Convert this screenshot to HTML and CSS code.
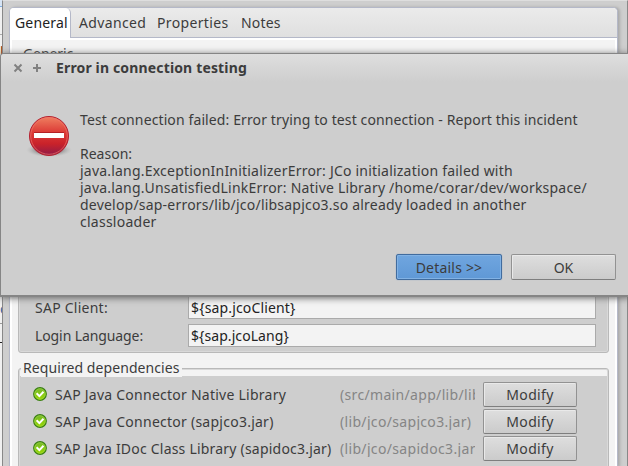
FILE: index.html
```html
<!DOCTYPE html>
<html lang="en">
<head>
<meta charset="utf-8">
<title>Error in connection testing</title>
<link rel="stylesheet" href="styles.css">
</head>
<body>
<svg width="0" height="0" class="defs">
  <defs>
    <linearGradient id="green" x1="0" y1="0" x2="0" y2="1"><stop offset="0" stop-color="#71b62c"/><stop offset="1" stop-color="#9bd900"/></linearGradient>
    <symbol id="check" viewBox="0 0 14 14">
      <circle cx="7" cy="7" r="6.3" fill="url(#green)" stroke="#397f12" stroke-width="1.2"/>
      <circle cx="7" cy="7" r="5.3" fill="none" stroke="#a4d94c" stroke-width=".6"/>
      <path d="M3.6 6.3L6.4 9.1L10.5 4.8" fill="none" stroke="#fff" stroke-width="2"/>
    </symbol>
  </defs>
</svg>
<div class="desktop">
  <div class="behind"><i class="b1"></i><i class="b2"></i><i class="b3">n</i><i class="b5">c</i><i class="b6"></i><i class="b7"></i></div>
  <main class="window">
    <section class="folder">
      <nav class="tabs">
        <span class="tab active"><span class="t-general">General</span></span>
        <span class="tab advanced"><span class="t-advanced">Advanced</span></span>
        <span class="tab properties"><span class="t-properties">Properties</span></span>
        <span class="tab notes"><span class="t-notes">Notes</span></span>
      </nav>
      <div class="page">
        <div class="generic-title">Generic</div>
        <div class="group connection">
          <div class="field"><label class="t-client">SAP Client:</label><div class="input"><span class="t-vclient">${sap.jcoClient}</span></div></div>
          <div class="field"><label class="t-lang">Login Language:</label><div class="input"><span class="t-vlang">${sap.jcoLang}</span></div></div>
        </div>
        <div class="group deps">
          <h2><span class="t-deps">Required dependencies</span></h2>
          <div class="dep-list">
            <div class="dep"><svg class="ok" width="14" height="14"><use href="#check"/></svg><span class="name"><span class="t-d1">SAP Java Connector Native Library</span></span><span class="path"><span class="t-p1">(src/main/app/lib/lib</span></span><span class="button"><span class="t-mod">Modify</span></span></div>
            <div class="dep"><svg class="ok" width="14" height="14"><use href="#check"/></svg><span class="name"><span class="t-d2">SAP Java Connector (sapjco3.jar)</span></span><span class="path"><span class="t-p2">(lib/jco/sapjco3.jar)</span></span><span class="button"><span class="t-mod">Modify</span></span></div>
            <div class="dep"><svg class="ok" width="14" height="14"><use href="#check"/></svg><span class="name"><span class="t-d3">SAP Java IDoc Class Library (sapidoc3.jar)</span></span><span class="path"><span class="t-p3">(lib/jco/sapidoc3.jar</span></span><span class="button"><span class="t-mod">Modify</span></span></div>
          </div>
        </div>
      </div>
    </section>
  </main>
  <section class="dialog">
    <header>
      <svg width="32" height="12" viewBox="0 0 32 12" fill="none" stroke="#818181" stroke-width="2"><path d="M1.5 2.5L8.5 9.5M8.5 2.5L1.5 9.5M20 6H28M24 2V10"/></svg>
      <h1><span class="t-title">Error in connection testing</span></h1>
    </header>
    <div class="body">
      <svg class="error" width="46" height="46" viewBox="0 0 46 46">
        <defs>
          <linearGradient id="red" x1="0" y1="0" x2="0" y2="1"><stop offset="0" stop-color="#ef8161"/><stop offset=".4" stop-color="#dc3b37"/><stop offset=".7" stop-color="#c9222a"/><stop offset="1" stop-color="#8e1a48"/></linearGradient>
          <radialGradient id="shade"><stop offset=".5" stop-color="#888"/><stop offset="1" stop-color="#bbb" stop-opacity="0"/></radialGradient>
        </defs>
        <ellipse cx="23" cy="35" rx="23" ry="7" fill="url(#shade)"/>
        <circle cx="23" cy="21" r="19.5" fill="url(#red)" stroke="#b4202f"/>
        <circle cx="23" cy="21" r="18.3" fill="none" stroke="#f1756c" stroke-opacity=".65"/>
        <path d="M8 17.5H38" stroke="#b51f24"/>
        <path d="M8 18H38V23H8Z" fill="#fff"/>
      </svg>
      <div class="message">
        <p><span class="t-m1">Test connection failed: Error trying to test connection - Report this incident</span></p>
        <p class="blank"></p>
        <p><span class="t-m2">Reason:</span></p>
        <p><span class="t-m3">java.lang.ExceptionInInitializerError: JCo initialization failed with</span></p>
        <p><span class="t-m4">java.lang.UnsatisfiedLinkError: Native Library /home/corar/dev/workspace/</span></p>
        <p><span class="t-m5">develop/sap-errors/lib/jco/libsapjco3.so already loaded in another</span></p>
        <p><span class="t-m6">classloader</span></p>
      </div>
    </div>
    <footer><span class="button primary"><span class="t-det">Details &gt;&gt;</span></span><span class="button"><span class="t-ok">OK</span></span></footer>
  </section>
</div>
</body>
</html>
```
FILE: styles.css
```css
* { box-sizing: border-box; }
body { margin: 0; font: 14px/17px "Noto Sans", "Open Sans", sans-serif; color: #3c3c3c; }
h1, h2, p { margin: 0; font-size: inherit; }
.defs { position: absolute; }
.desktop { position: relative; width: 628px; height: 466px; overflow: hidden; display: flex; background: #f0f0f0; white-space: nowrap; }

.behind { width: 3px; height: 466px; display: flex; flex-direction: column; overflow: hidden; }
.behind i { flex: none; font-style: normal; }
.b1 { height: 7px; background: #d6e4f4; border-bottom: 1px solid #7faee2; }
.b2 { height: 28px; border-bottom: 1px solid #aaa; }
.b3 { height: 265px; color: #7c3215; padding-top: 5px; }
.b5 { height: 24px; color: #2a68a8; border-bottom: 1px solid #999; }
.b6 { height: 19px; border-bottom: 1px solid #222; }
.b7 { height: 123px; }

.window { flex: 1; height: 466px; background: #cecece; border-left: 1px solid #888; border-right: 1px solid #888; border-top: 1px solid #dedede; padding: 6px 9px 0 6px; }
.folder { height: 460px; border: 1px solid #b4b8c8; border-bottom: 0; border-radius: 5px 5px 0 0; background: #fff; overflow: hidden; box-shadow: 2px 0 3px #aaa; }
.tabs { height: 30px; display: flex; background: linear-gradient(#ebebeb, #dfdfdf); }
.tab { border-bottom: 1px solid #b4b8c8; padding-top: 6px; height: 30px; }
.active { width: 61px; padding-left: 5px; background: #fff; border-bottom: 0; border-right: 1px solid #b4b8c8; border-top-right-radius: 5px; color: #222; }
.advanced { width: 78px; padding-left: 8px; }
.properties { width: 84px; padding-left: 8px; }
.notes { flex: 1; padding-left: 8px; }
.page { margin: 2px 2px 0; height: 427px; background: #f3f3f3; padding: 0 6px; display: flex; flex-direction: column; }
.generic-title { height: 14px; padding: 5px 0 0 5px; letter-spacing: -.1px; }
.group { flex: none; border: 1px solid #b9b9b9; border-radius: 3px; background: #cecece; box-shadow: inset 0 0 0 1px #d9d9d9; }
.connection { height: 299px; display: flex; flex-direction: column; justify-content: flex-end; gap: 5px; padding: 0 12px 5px 16px; }
.field { display: flex; align-items: center; height: 23px; }
.field label { width: 153px; }
.input { flex: 1; height: 23px; background: #f3f3f3; border: 1px solid #aaa; padding: 2px 2px 0; color: #222; }
.deps { margin-top: 15px; height: 110px; background: #f3f3f3; padding: 0 1px; }
.deps h2 { height: 7px; line-height: 17px; font-weight: 400; padding-left: 1px; }
.deps h2 span { position: relative; top: -10px; background: #f3f3f3; padding: 0 2px; }
.dep-list { background: #cecece; height: 100px; padding: 6px 30px 0 13px; display: flex; flex-direction: column; gap: 3px; }
.dep { display: flex; align-items: center; height: 24px; }
.ok { width: 14px; margin-right: 8px; }
.name { width: 285px; }
.path { width: 135px; overflow: hidden; color: #858585; margin-right: 8px; }
.button { display: flex; justify-content: center; align-items: center; height: 25px; flex: none; width: 94px; border: 1px solid #929292; border-bottom-color: #7e7e7e; border-radius: 2px; background: linear-gradient(#dedede, #cbcbcb); box-shadow: inset 1px 1px #e9e9e9; }

.dialog { position: absolute; left: 0; top: 53px; width: 630px; height: 244px; background: #cecece; border: 1px solid #858585; border-bottom-width: 2px; border-radius: 4px 0 0 0; box-shadow: 0 1px 7px #666; }
header { height: 28px; display: flex; align-items: center; background: linear-gradient(#dedede, #cecece); border-radius: 3px 0 0 0; padding-left: 12px; }
header svg { margin-right: 11px; }
h1 { font-weight: 700; margin-top: -2px; }
.body { display: flex; height: 172px; padding: 29px 0 0 25px; }
.error { margin-top: 4px; margin-right: 8px; flex: none; }
.message { width: 530px; }
.message p { height: 17px; }
footer { display: flex; justify-content: flex-end; gap: 9px; padding-right: 13px; }
footer .button { width: 105px; height: 26px; }
footer .primary { width: 106px; border-color: #416c9e; background: linear-gradient(#70a6df, #5f98d6); box-shadow: inset 0 0 0 1px #82b2e4, 0 0 1px #6c92bd; }

.t-m1 { letter-spacing: .115px; }
.t-m3, .t-m4, .t-m5, .t-d3 { letter-spacing: .21px; }
.t-m6, .t-d1, .t-d2, .t-client { letter-spacing: .25px; }
.t-title, .t-vclient, .t-general { letter-spacing: .15px; }
.t-p1, .t-p2, .t-p3 { letter-spacing: .33px; }
.t-lang { letter-spacing: -.1px; }
.t-vlang { letter-spacing: .07px; }
.t-deps { letter-spacing: .08px; }
.t-advanced, .t-properties, .t-mod { letter-spacing: .35px; }
.t-notes, .t-det { letter-spacing: .2px; }
```
